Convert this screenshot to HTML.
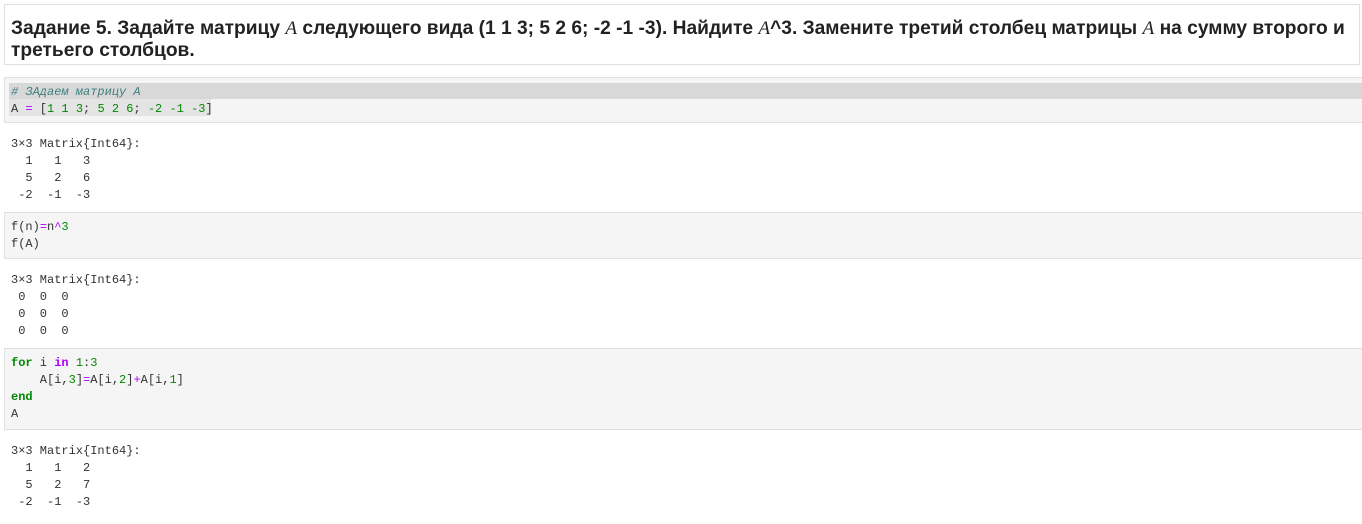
<!DOCTYPE html>
<html><head><meta charset="utf-8"><style>
body{margin:0;background:#fff;width:1362px;height:524px;overflow:hidden;font-family:"Liberation Sans",sans-serif;}
.h{position:absolute;left:4px;top:4px;width:1356px;height:61px;border:1px solid #e0e0e0;box-sizing:border-box;}
.h div{position:absolute;left:6px;top:13px;font-size:19.2px;font-weight:bold;color:#222;line-height:22px;width:1348px;}
.h i{font-family:"Liberation Serif",serif;font-weight:normal;}
.c{position:absolute;left:4px;width:1360px;background:#f5f5f5;border:1px solid #e0e0e0;box-sizing:border-box;}
pre{margin:0;font-family:"Liberation Mono",monospace;font-size:12px;line-height:17px;color:#333;position:absolute;left:11px;}
.k{color:#080;font-weight:bold}.n{color:#080}.p{color:#a0f}
.cm{color:#408080;font-style:italic}
</style></head><body>
<div class="h"><div>Задание 5. Задайте матрицу <i>A</i> следующего вида (1 1 3; 5 2 6; -2 -1 -3). Найдите <i>A</i>^3. Замените третий столбец матрицы <i>A</i> на сумму второго и третьего столбцов.</div></div>

<div class="c" style="top:77px;height:46px;"></div>
<div style="position:absolute;left:9px;top:83px;width:1353px;height:16px;background:#d8d8d8"></div>
<div style="position:absolute;left:9px;top:99px;width:202px;height:17px;background:#e4e4e4"></div>
<pre style="top:84px"><span class="cm"># ЗАдаем матрицу A</span>
A <span class="p">=</span> [<span class="n">1</span> <span class="n">1</span> <span class="n">3</span>; <span class="n">5</span> <span class="n">2</span> <span class="n">6</span>; <span class="n">-2</span> <span class="n">-1</span> <span class="n">-3</span>]</pre>

<pre style="top:136px">3×3 Matrix{Int64}:
  1   1   3
  5   2   6
 -2  -1  -3</pre>

<div class="c" style="top:212px;height:47px;"></div>
<pre style="top:219px">f(n)<span class="p">=</span>n<span class="p">^</span><span class="n">3</span>
f(A)</pre>

<pre style="top:272px">3×3 Matrix{Int64}:
 0  0  0
 0  0  0
 0  0  0</pre>

<div class="c" style="top:348px;height:82px;"></div>
<pre style="top:355px"><span class="k">for</span> i <span class="p" style="font-weight:bold">in</span> <span class="n">1</span>:<span class="n">3</span>
    A[i,<span class="n">3</span>]<span class="p">=</span>A[i,<span class="n">2</span>]<span class="p">+</span>A[i,<span class="n">1</span>]
<span class="k">end</span>
A</pre>

<pre style="top:443px">3×3 Matrix{Int64}:
  1   1   2
  5   2   7
 -2  -1  -3</pre>
</body></html>
